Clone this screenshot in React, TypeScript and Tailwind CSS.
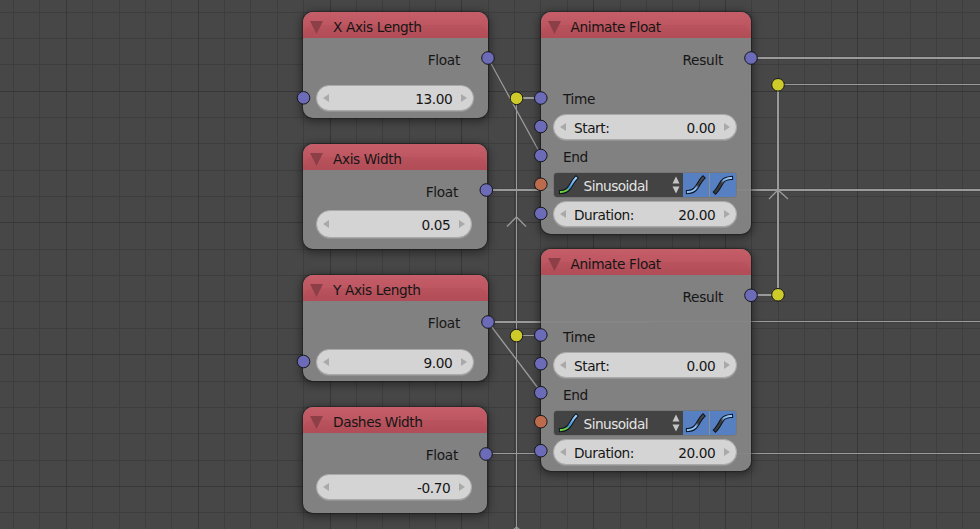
import type { ReactNode } from 'react';

const STEP_X = 26.37;
const STEP_Y = 26.36;
const columns = Array.from({ length: 38 }, (_, i) => ({ at: Math.floor(66.3 + (i - 2) * STEP_X), major: (i - 2) % 5 === 0 }));
const rows = Array.from({ length: 20 }, (_, i) => ({ at: Math.floor(91.1 + (i - 3) * STEP_Y), major: (i - 3) % 5 === 0 }));

function Grid() {
  const minor = [...columns.filter((c) => !c.major).map((c) => `M${c.at + 0.5} 0V529`), ...rows.filter((r) => !r.major).map((r) => `M0 ${r.at + 0.5}H980`)].join('');
  const major = [...columns.filter((c) => c.major).map((c) => `M${c.at + 0.5} 0V529`), ...rows.filter((r) => r.major).map((r) => `M0 ${r.at + 0.5}H980`)].join('');
  return (
    <svg className="absolute inset-0" width="980" height="529">
      <path d={minor} stroke="#3e3e3e" />
      <path d={major} stroke="#373737" />
    </svg>
  );
}

function Wires() {
  return (
    <svg className="absolute inset-0" width="980" height="529" fill="none" stroke="#9a9a9a">
      <path strokeWidth="4" stroke="#000" strokeOpacity="0.06" d="M751 58H980M486 190H980M488 322H541M778 85V295M778 84.5H980M541 321.5H980M486 453.5H980M516.5 98V529" />
      <path strokeWidth="2" d="M751 58H980M486 190H980M488 322H649M516 98H541M751 295H778M778 85V295" />
      <path strokeWidth="1" d="M778 84.5H980M649 321.5H980M486 453.5H980M516.5 98V529M516 335.5H541" />
      <path strokeWidth="1.3" d="M488 58L541 155M488 322L541 392" />
      <path strokeWidth="1.3" d="M507 226.5L516.5 217L526 226.5M769 199L778 190L788 199M512 531L516.5 527L521 531" />
    </svg>
  );
}

const BLUE = '#6b6bb8';
const YELLOW = '#cccb2a';
const ORANGE = '#bd6b4d';
const sockets: [number, number, string][] = [
  [488, 58, BLUE], [303.5, 97.8, BLUE], [486.3, 190, BLUE], [488, 322, BLUE], [303.5, 361.5, BLUE], [486, 454, BLUE],
  [751, 58, BLUE], [540.8, 98, BLUE], [540.8, 126.5, BLUE], [540.8, 155.5, BLUE], [540.8, 184.3, ORANGE], [540.8, 213.5, BLUE],
  [751, 295.3, BLUE], [540.8, 335, BLUE], [540.8, 363.7, BLUE], [540.8, 392.7, BLUE], [540.8, 421.7, ORANGE], [540.8, 450.7, BLUE],
  [516.5, 98.3, YELLOW], [516.5, 335.6, YELLOW], [778, 84.8, YELLOW], [778, 294.8, YELLOW],
];

function Sockets() {
  return (
    <svg className="absolute inset-0" width="980" height="529">
      {sockets.map(([x, y, fill]) => (
        <circle key={`${x}-${y}`} cx={x} cy={y} r="6.3" fill={fill} stroke="#16161a" strokeWidth="1" />
      ))}
    </svg>
  );
}

function Node({ place, title, children }: { place: string; title: string; children: ReactNode }) {
  return (
    <section className={`absolute flex flex-col overflow-hidden rounded-[10px] bg-[#858585]/95 shadow-[0_0_1px_1px_rgba(0,0,0,0.28),0_2px_9px_2px_rgba(0,0,0,0.4)] ${place}`}>
      <header className="relative flex h-[26px] shrink-0 items-center bg-linear-to-b from-[#c55e68] to-[#b54f59] pt-[4px] pl-[7px]">
        <span className="absolute inset-x-0 top-[13px] bottom-0 rounded-t-[10px] bg-[#a04550]/15" />
        <svg className="relative mr-[10px]" width="13" height="13" viewBox="0 0 13 13">
          <path d="M0 0H13L6.5 13Z" fill="#8c3f47" />
        </svg>
        <h2 className="relative text-[13.7px] leading-5 tracking-[-0.4px]">{title}</h2>
      </header>
      {children}
    </section>
  );
}

function Output({ name, inset }: { name: string; inset: string }) {
  return <div className={`mt-3 h-5 shrink-0 text-right leading-5 tracking-[-0.3px] ${inset}`}>{name}</div>;
}

function Arrow({ flip }: { flip?: boolean }) {
  return (
    <svg className={flip ? 'mb-[2px] rotate-180' : 'mb-[2px]'} width="6" height="8" viewBox="0 0 6 8">
      <path d="M6 0V8L0 4Z" fill="#a9a9a9" />
    </svg>
  );
}

function NumberField({ place, label, value }: { place: string; label?: string; value: string }) {
  return (
    <div className={`flex shrink-0 items-center rounded-full border border-[#a9a9a9] bg-[#d4d4d4] px-[6px] pt-[2px] shadow-[0_1px_0_rgba(255,255,255,0.15)] ${place}`}>
      <Arrow />
      <span className="ml-2 tracking-[-0.45px]">{label}</span>
      <span className="mr-[8.7px] ml-auto tracking-[-0.4px]">{value}</span>
      <Arrow flip />
    </div>
  );
}

function Curve({ d, id, from, to, edge, turn }: { d: string; id: string; from: string; to: string; edge: string; turn: number }) {
  return (
    <svg width="22" height="20" viewBox="0 0 22 20" fill="none" strokeLinecap="square">
      <defs>
        <linearGradient id={id} gradientUnits="userSpaceOnUse" x1="2" y1="18" x2="20" y2="2">
          <stop offset={turn - 0.12} stopColor={from} />
          <stop offset={turn + 0.05} stopColor={to} />
          <stop offset="0.9" stopColor={edge} />
        </linearGradient>
      </defs>
      <path d={d} stroke="#0c1420" strokeWidth="4.2" />
      <path d={d} stroke={`url(#${id})`} strokeWidth="2.2" />
    </svg>
  );
}

const EASE_IN = 'M3 17C7.500 16.800 9.500 15.500 11.500 12.500C14 9 15 6 18 3';
const EASE_OUT = 'M3.500 17C6.500 14 8 10 10.500 6.500C12.500 4 15 3.200 19 3';

function Interpolation({ id, place }: { id: string; place: string }) {
  return (
    <div className={`flex shrink-0 overflow-hidden rounded-[4px] border border-[#777] ${place}`}>
      <div className="flex w-[129px] items-center bg-[#434343] pl-1 text-[#e4e4e4]">
        <Curve id={`${id}a`} d={EASE_IN} from="#6bd03c" to="#3f8fd0" edge="#a4d4ff" turn={0.38} />
        <span className="mt-[2px] ml-[3.5px] tracking-[-0.55px]">Sinusoidal</span>
        <svg className="mr-[3px] ml-auto" width="8" height="18" viewBox="0 0 8 18" fill="#c4c4c4">
          <path d="M4 0.500L7.500 7.500H0.500ZM4 17.500L7.500 10.500H0.500Z" />
        </svg>
      </div>
      <div className="flex flex-1 items-center justify-center border-r border-[#8a8f98] bg-[#5680c2]">
        <Curve id={`${id}b`} d={EASE_IN} from="#8cc4fa" to="#3c3c3c" edge="#4a4a4a" turn={0.52} />
      </div>
      <div className="flex flex-1 items-center justify-center bg-[#5680c2]">
        <Curve id={`${id}c`} d={EASE_OUT} from="#3c3c3c" to="#7fb6ec" edge="#9accfa" turn={0.62} />
      </div>
    </div>
  );
}

function InputName({ name, place }: { name: string; place: string }) {
  return <div className={`h-5 shrink-0 pl-[22.5px] leading-5 tracking-[-0.35px] ${place}`}>{name}</div>;
}

export default function App() {
  return (
    <main className="relative h-[529px] w-[980px] overflow-hidden bg-[#474747] font-['DejaVu_Sans',sans-serif] text-[13.7px] text-[#161616]">
      <Grid />
      <Wires />
      <Node place="left-[303px] top-[12px] h-[106px] w-[185px]" title="X Axis Length">
        <Output name="Float" inset="pr-[28px]" />
        <NumberField place="mt-[15px] mr-[14px] ml-[13px] h-[26px]" value="13.00" />
      </Node>
      <Node place="left-[303px] top-[144px] h-[105px] w-[183.5px]" title="Axis Width">
        <Output name="Float" inset="pr-[28.5px]" />
        <NumberField place="mt-[8px] mr-[14.5px] ml-[13px] h-[28px]" value="0.05" />
      </Node>
      <Node place="left-[303px] top-[275px] h-[106px] w-[185px]" title="Y Axis Length">
        <Output name="Float" inset="pr-[28px]" />
        <NumberField place="mt-[16px] mr-[14px] ml-[13px] h-[26px]" value="9.00" />
      </Node>
      <Node place="left-[303px] top-[407px] h-[106px] w-[183.5px]" title="Dashes Width">
        <Output name="Float" inset="pr-[28.5px]" />
        <NumberField place="mt-[9px] mr-[14.5px] ml-[13px] h-[26px]" value="-0.70" />
      </Node>
      <Node place="left-[540.5px] top-[12px] h-[222px] w-[210.500px]" title="Animate Float">
        <Output name="Result" inset="pr-[28px]" />
        <InputName name="Time" place="mt-[19px]" />
        <NumberField place="mt-[5px] mr-[14px] ml-[12.5px] h-[26px]" label="Start:" value="0.00" />
        <InputName name="End" place="mt-[7px]" />
        <Interpolation id="first" place="ml-[12.5px] mr-[14px] mt-[5px] h-[26px]" />
        <NumberField place="mt-[3px] mr-[14px] ml-[12.5px] h-[26px]" label="Duration:" value="20.00" />
      </Node>
      <Node place="left-[540.5px] top-[249px] h-[222px] w-[210.500px]" title="Animate Float">
        <Output name="Result" inset="pr-[28px]" />
        <InputName name="Time" place="mt-[20px]" />
        <NumberField place="mt-[5px] mr-[14px] ml-[12.5px] h-[26px]" label="Start:" value="0.00" />
        <InputName name="End" place="mt-[7px]" />
        <Interpolation id="second" place="ml-[12.5px] mr-[14px] mt-[5px] h-[26px]" />
        <NumberField place="mt-[3px] mr-[14px] ml-[12.5px] h-[26px]" label="Duration:" value="20.00" />
      </Node>
      <Sockets />
    </main>
  );
}
